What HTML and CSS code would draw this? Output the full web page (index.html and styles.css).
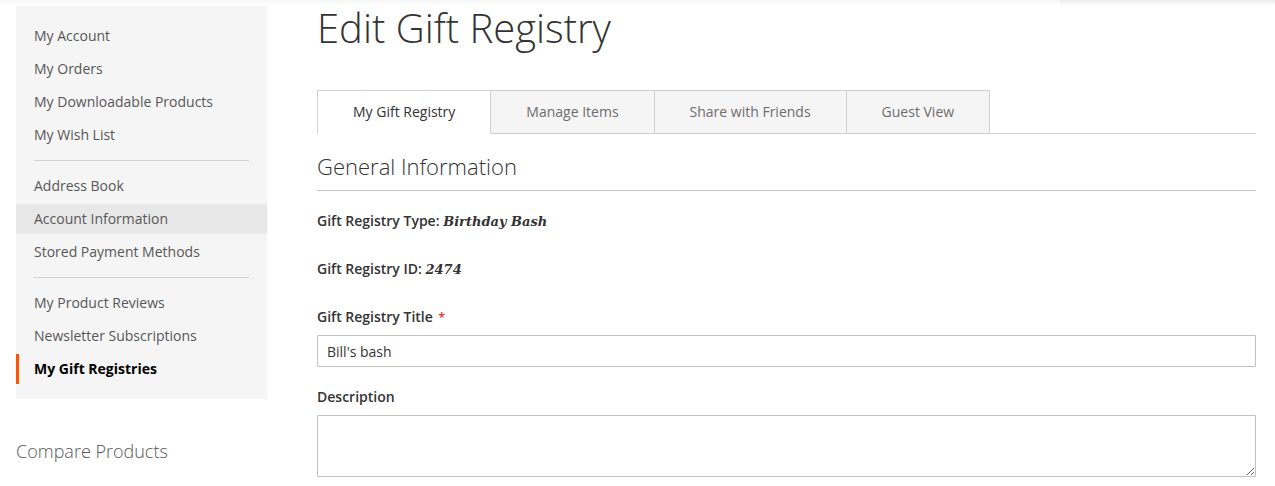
FILE: index.html
```html
<!DOCTYPE html>
<html lang="en">
<head>
<meta charset="utf-8">
<title>Edit Gift Registry</title>
<link rel="stylesheet" href="styles.css">
</head>
<body>
<div class="topshade"></div>
<div class="page">
  <aside class="sidebar">
    <nav class="account-nav">
      <ul class="nav">
        <li class="nav-item"><a href="#">My Account</a></li>
        <li class="nav-item"><a href="#">My Orders</a></li>
        <li class="nav-item"><a href="#">My Downloadable Products</a></li>
        <li class="nav-item"><a href="#">My Wish List</a></li>
        <li class="delimiter"></li>
        <li class="nav-item"><a href="#">Address Book</a></li>
        <li class="nav-item hover"><a href="#">Account Information</a></li>
        <li class="nav-item"><a href="#">Stored Payment Methods</a></li>
        <li class="delimiter"></li>
        <li class="nav-item"><a href="#">My Product Reviews</a></li>
        <li class="nav-item"><a href="#">Newsletter Subscriptions</a></li>
        <li class="nav-item current"><strong>My Gift Registries</strong></li>
      </ul>
    </nav>
    <div class="compare-title">Compare Products</div>
  </aside>
  <main class="main">
    <h1 class="page-title">Edit Gift Registry</h1>
    <div class="tabs">
      <div class="tab active">My Gift Registry</div>
      <div class="tab">Manage Items</div>
      <div class="tab">Share with Friends</div>
      <div class="tab">Guest View</div>
    </div>
    <form class="form">
      <div class="legend">General Information</div>
      <div class="info-row"><span class="info-label">Gift Registry Type:</span> <em class="info-value">Birthday Bash</em></div>
      <div class="info-row"><span class="info-label">Gift Registry ID:</span> <em class="info-value">2474</em></div>
      <div class="field">
        <label class="label" for="title">Gift Registry Title <span class="req">*</span></label>
        <input class="input" id="title" type="text" value="Bill's bash">
      </div>
      <div class="field">
        <label class="label" for="desc">Description</label>
        <textarea class="textarea" id="desc"></textarea>
      </div>
    </form>
  </main>
</div>
</body>
</html>
```

FILE: styles.css
```css
* { box-sizing: border-box; }
html, body { margin: 0; padding: 0; background: #fff; }
body {
  font-family: "Open Sans", "Liberation Sans", sans-serif;
  font-size: 14px;
  line-height: 20px;
  color: #333;
  position: relative;
  overflow: hidden;
  height: 486px;
}
.topshade {
  position: absolute;
  left: 0; top: 0; right: 0;
  height: 6px;
  background: linear-gradient(to bottom, rgba(0,0,0,0.035), rgba(0,0,0,0));
  z-index: 5;
}
.topshade::after {
  content: "";
  position: absolute;
  left: 1060px; right: 0; top: 0;
  height: 6px;
  background: linear-gradient(to bottom, rgba(0,0,0,0.045), rgba(0,0,0,0));
}
.page {
  display: flex;
  align-items: flex-start;
  padding: 6px 19px 0 16px;
  gap: 50px;
}
.sidebar { width: 251px; flex: none; }
.account-nav {
  background: #f5f5f5;
  padding: 15px 0;
}
.nav {
  list-style: none;
  margin: 0;
  padding: 0;
  display: flex;
  flex-direction: column;
  gap: 3px;
}
.nav-item a, .nav-item strong {
  display: block;
  padding: 5px 18px 5px 15px;
  border-left: 3px solid transparent;
  color: #575757;
  text-decoration: none;
  line-height: 20px;
}
.nav-item.hover a { background: #e8e8e8; }
.nav-item.current strong {
  border-left-color: #ff5501;
  color: #000;
  font-weight: 700;
}
.delimiter {
  height: 1px;
  background: #d1d1d1;
  margin: 7px 18px;
}
.compare-title {
  margin-top: 40px;
  font-size: 18px;
  font-weight: 300;
  color: #575757;
  line-height: 24px;
}
.main { flex: 1; min-width: 0; }
.page-title {
  margin: 0;
  font-size: 40px;
  font-weight: 300;
  line-height: 44px;
  color: #333;
}
.tabs {
  display: flex;
  margin-top: 40px;
  border-bottom: 1px solid #d1d1d1;
}
.tab {
  height: 44px;
  margin-bottom: -1px;
  padding: 0 35px;
  line-height: 42px;
  border: 1px solid #d1d1d1;
  border-left-width: 0;
  background: #f5f5f5;
  color: #6d6d6d;
}
.tab:first-child { border-left-width: 1px; }
.tab.active {
  background: #fff;
  border-bottom-color: #fff;
  color: #333;
}
.form { margin: 0; }
.legend {
  margin-top: 18px;
  padding-bottom: 10px;
  border-bottom: 1px solid #c6c6c6;
  font-size: 22px;
  font-weight: 300;
  line-height: 28px;
  color: #333;
}
.info-row {
  margin-top: 20px;
  margin-bottom: 28px;
  height: 20px;
  line-height: 20px;
}
.info-row + .info-row { margin-top: 0; }
.info-label { font-weight: 600; }
.info-value {
  font-family: "DejaVu Serif", "Liberation Serif", serif;
  font-style: italic;
  font-weight: 700;
  font-size: 13px;
  line-height: 1;
}
.field { margin-bottom: 20px; }
.label {
  display: block;
  height: 20px;
  font-weight: 600;
  margin-bottom: 8px;
}
.req { color: #e02b27; font-size: 12px; line-height: 1; margin-left: 2px; }
.input {
  display: block;
  width: 100%;
  height: 32px;
  padding: 0 9px;
  border: 1px solid #c2c2c2;
  border-radius: 1px;
  font-family: inherit;
  font-size: 14px;
  color: #333;
  background: #fff;
}
.textarea {
  display: block;
  width: 100%;
  height: 62px;
  padding: 10px;
  border: 1px solid #c2c2c2;
  border-radius: 1px;
  font-family: inherit;
  font-size: 14px;
  background: #fff;
}
```
